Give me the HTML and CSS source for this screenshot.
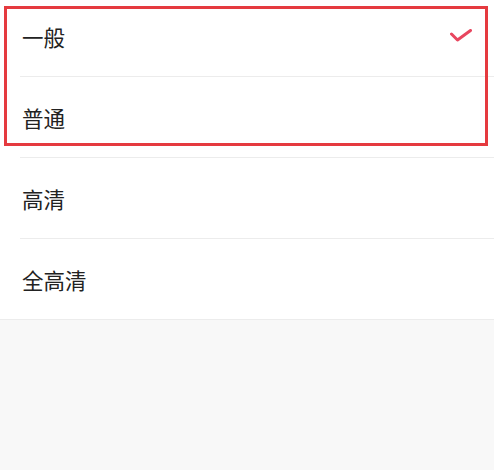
FILE: index.html
```html
<!DOCTYPE html>
<html lang="zh-CN">
<head>
<meta charset="utf-8">
<title>清晰度</title>
<link rel="stylesheet" href="styles.css">
</head>
<body>
  <div class="page">
    <ul class="options">
      <li class="option"><span class="label">一般</span>
        <svg class="check" width="22" height="13" viewBox="0 0 22 13"><path d="M1.5 5 L7.5 11 L20.5 1.5" fill="none" stroke="#e8465f" stroke-width="3" stroke-linecap="round" stroke-linejoin="round"/></svg>
      </li>
      <li class="option"><span class="label">普通</span></li>
      <li class="option"><span class="label">高清</span></li>
      <li class="option last"><span class="label">全高清</span></li>
    </ul>
    <div class="highlight"></div>
  </div>
</body>
</html>
```
FILE: styles.css
```css
html, body {
  margin: 0;
  padding: 0;
  background: #f8f8f8;
}
body {
  font-family: "Noto Sans CJK SC", "Noto Sans", sans-serif;
  color: #222;
}
.page {
  position: relative;
  width: 494px;
  height: 470px;
  overflow: hidden;
}
.options {
  list-style: none;
  margin: -4px 0 0 0;
  padding: 0 0 0 20px;
  background: #fff;
  border-bottom: 1px solid #ececec;
}
.option {
  display: flex;
  align-items: center;
  justify-content: space-between;
  border-bottom: 1px solid #ececec;
  padding: 2px 22px 0 2px;
  height: 78px;
}
.option.last {
  border-bottom: none;
}
.label {
  font-size: 21.5px;
  line-height: 1;
}
.check {
  display: block;
  margin-top: -4px;
}
.highlight {
  position: absolute;
  left: 4px;
  top: 6px;
  width: 484px;
  height: 140px;
  box-sizing: border-box;
  border: 3px solid #e53a3f;
}
```
